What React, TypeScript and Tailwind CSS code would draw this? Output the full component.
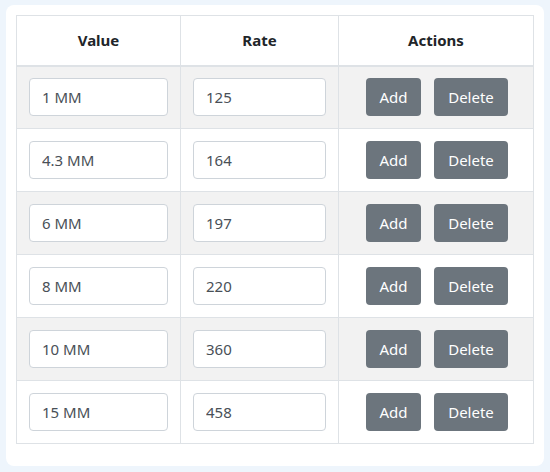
const rows = [
  { value: "1 MM", rate: "125" },
  { value: "4.3 MM", rate: "164" },
  { value: "6 MM", rate: "197" },
  { value: "8 MM", rate: "220" },
  { value: "10 MM", rate: "360" },
  { value: "15 MM", rate: "458" },
];

export default function App() {
  return (
    <div
      className="w-[550px] h-[472px] bg-[#eef5fc] pt-[5px] pl-[6px]"
      style={{ fontFamily: '"Segoe UI", "Noto Sans", sans-serif' }}
    >
      <div className="w-[538px] h-[461px] bg-white rounded-lg pt-[10px] pl-[10px]">
        <table className="border-collapse w-[518px] text-[#212529]">
          <thead>
            <tr>
              <th className="w-[164px] h-[50px] border border-[#dee2e6] border-b-2 text-[15px] font-bold text-center">
                Value
              </th>
              <th className="w-[158px] border border-[#dee2e6] border-b-2 text-[15px] font-bold text-center">
                Rate
              </th>
              <th className="border border-[#dee2e6] border-b-2 text-[15px] font-bold text-center">
                Actions
              </th>
            </tr>
          </thead>
          <tbody>
            {rows.map((r, i) => (
              <tr key={r.value} className={i % 2 === 0 ? "bg-[#f2f2f2]" : "bg-white"}>
                <td className="border border-[#dee2e6] px-3 h-[63px]">
                  <input
                    readOnly
                    value={r.value}
                    className="w-full h-[38px] px-3 bg-white border border-[#ced4da] rounded text-[15px] text-[#495057] outline-none"
                  />
                </td>
                <td className="border border-[#dee2e6] px-3">
                  <input
                    readOnly
                    value={r.rate}
                    className="w-full h-[38px] px-3 bg-white border border-[#ced4da] rounded text-[15px] text-[#495057] outline-none"
                  />
                </td>
                <td className="border border-[#dee2e6] px-3">
                  <div className="flex justify-center gap-[13px] pl-[2px]">
                    <button className="w-[55px] h-[38px] bg-[#6c757d] text-white text-[15px] rounded">
                      Add
                    </button>
                    <button className="w-[74px] h-[38px] bg-[#6c757d] text-white text-[15px] rounded">
                      Delete
                    </button>
                  </div>
                </td>
              </tr>
            ))}
          </tbody>
        </table>
      </div>
    </div>
  );
}
